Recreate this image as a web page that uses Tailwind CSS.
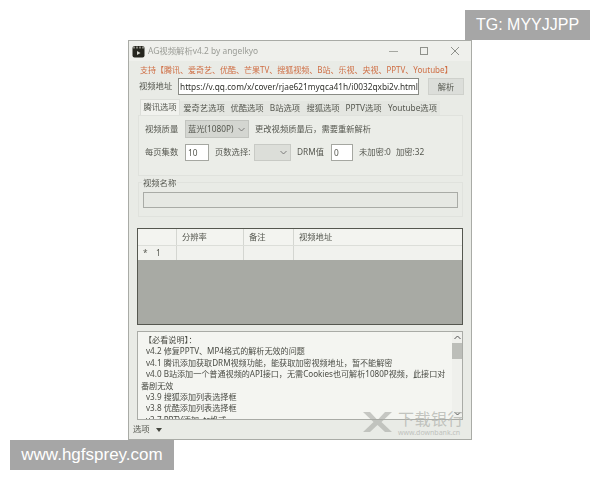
<!DOCTYPE html>
<html lang="en">
<head>
    <meta charset="UTF-8">
    <title>AG视频解析</title>
    <script src="https://cdn.jsdelivr.net/npm/@tailwindcss/browser@4"></script>
</head>
<body class="relative w-[600px] h-[480px] overflow-hidden bg-white font-['Noto_Sans','Noto_Sans_CJK_SC',sans-serif]">

    <!-- badges -->
    <div class="absolute left-[465px] top-[10px] w-[125px] h-[30px] bg-[#a6a6a6] text-white text-[16px] leading-[30px] text-center font-['Liberation_Sans',sans-serif]">TG: MYYJJPP</div>
    <div class="absolute left-[10px] top-[440px] w-[164px] h-[30px] bg-[#a6a6a6] text-white text-[17px] leading-[30px] text-center font-['Liberation_Sans',sans-serif]">www.hgfsprey.com</div>

    <!-- app window -->
    <div class="absolute left-[128px] top-[40px] w-[344px] h-[400px] flex flex-col bg-[#e9ebe6] border border-[#a9aba6] text-[8.3px] text-[#55574f] blur-[0.3px] whitespace-nowrap">

        <div class="h-[20px] flex items-center pl-[3px] bg-[#eff0ec]">
            <svg width="13" height="13" viewBox="0 0 13 13" class="mr-[3px]">
                <rect x="0.5" y="1" width="12" height="11.5" rx="2" fill="#26261f"/>
                <path d="M2 1.5v2M5 1.5v2M8 1.5v2M11 1.5v2" stroke="#e8e8e0" stroke-width="1"/>
                <path d="M5 6l3.5 2L5 10z" fill="#d8d8d0"/>
            </svg>
            <span class="text-[#9a9c96] text-[8.4px]">AG视频解析v4.2 by angelkyo</span>
            <div class="ml-auto flex items-center">
                <svg width="30" height="12" viewBox="0 0 30 12"><path d="M10 6.500h9" stroke="#a5a7a1"/></svg>
                <svg width="32" height="12" viewBox="0 0 32 12"><rect x="11.500" y="2.500" width="7" height="7" fill="none" stroke="#8f918b"/></svg>
                <svg width="30" height="12" viewBox="0 0 30 12"><path d="M10 2l8 8M18 2l-8 8" stroke="#8f918b"/></svg>
            </div>
        </div>

        <div class="h-[18px] pl-[11px] flex items-center text-[#cf6f45] text-[8px]">支持【腾讯、爱奇艺、优酷、芒果TV、搜狐视频、B站、乐视、央视、PPTV、Youtube】</div>

        <div class="h-[16px] mt-[-1px] flex items-center pl-[10px]">
            <span class="w-[39px]">视频地址</span>
            <div class="w-[241px] h-[17px] bg-white border border-[#8a8c86] text-[#30312c] text-[8.3px] leading-[15px] pl-[1px] overflow-hidden">https://v.qq.com/x/cover/rjae621myqca41h/i0032qxbi2v.html</div>
            <div class="ml-[9px] w-[36px] h-[17px] bg-[#dcdeda] border border-[#cfd1cc] text-center leading-[15px]">解析</div>
        </div>

        <div class="h-[16px] mt-[5px] ml-[11px] flex items-end">
            <div class="w-[40px] h-[16px] bg-[#f1f2ee] border border-b-0 border-[#dcded9] text-center leading-[14px]">腾讯选项</div>
            <div class="w-[48px] h-[14px] text-center leading-[14px] bg-[#e4e6e1]">爱奇艺选项</div>
            <div class="w-[38px] h-[14px] text-center leading-[14px] bg-[#e4e6e1]">优酷选项</div>
            <div class="w-[38px] h-[14px] text-center leading-[14px] bg-[#e4e6e1]">B站选项</div>
            <div class="w-[38px] h-[14px] text-center leading-[14px] bg-[#e4e6e1]">搜狐选项</div>
            <div class="w-[43px] h-[14px] text-center leading-[14px] bg-[#e4e6e1]">PPTV选项</div>
            <div class="w-[55px] h-[14px] text-center leading-[14px] bg-[#e4e6e1]">Youtube选项</div>
        </div>

        <div class="h-[61px] mx-[9px] w-[325px] border border-[#e0e2dd] bg-[#ebede8] pl-[6px]">
            <div class="h-[18px] mt-[4px] flex items-center">
                <span class="w-[40px]">视频质量</span>
                <div class="w-[64px] h-[18px] bg-[#d4d6d1] border border-[#c2c4bf] flex items-center pl-[2px] leading-[16px]"><span>蓝光(1080P)</span>
                    <svg width="7" height="5" viewBox="0 0 7 5" class="ml-auto mr-[3px]"><path d="M0.500 1l3 3 3-3" fill="none" stroke="#666" stroke-width="0.8"/></svg>
                </div>
                <span class="ml-[6px]">更改视频质量后，需要重新解析</span>
            </div>
            <div class="h-[17px] mt-[6px] flex items-center">
                <span class="w-[40px]">每页集数</span>
                <div class="w-[24px] h-[17px] bg-white border border-[#a5a7a1] pl-[2px] leading-[15px]">10</div>
                <span class="ml-[6px] w-[39px]">页数选择:</span>
                <div class="w-[37px] h-[17px] bg-[#dcded9] border border-[#c8cac5] flex items-center">
                    <svg width="7" height="5" viewBox="0 0 7 5" class="ml-auto mr-[3px]"><path d="M0.500 1l3 3 3-3" fill="none" stroke="#666" stroke-width="0.8"/></svg>
                </div>
                <span class="ml-[6px] w-[34px]">DRM值</span>
                <div class="w-[22px] h-[17px] bg-white border border-[#a5a7a1] pl-[2px] leading-[15px]">0</div>
                <span class="ml-[6px]">未加密:0</span>
                <span class="ml-[5px]">加密:32</span>
            </div>
        </div>

        <!-- video name group -->
        <div class="relative h-[35px] mt-[6px] mx-[9px] w-[325px] border border-[#e0e2dd] pt-[9px] px-[4px]">
            <span class="absolute left-[3px] top-[-7px] px-[1px] bg-[#e9ebe6] leading-[13px]">视频名称</span>
            <div class="h-[16px] border border-[#a9aba6] bg-[#e6e8e3]"></div>
        </div>

        <!-- grid -->
        <div class="h-[97px] mt-[11px] mx-[8px] w-[326px] border border-[#55574f] bg-[#a8aaa4] flex flex-col">
            <div class="h-[16px] flex bg-[#f3f4f0]">
                <div class="w-[39px] border-r border-[#d4d6d1]"></div>
                <div class="w-[67px] border-r border-[#d4d6d1] pl-[5px] leading-[15px]">分辨率</div>
                <div class="w-[50px] border-r border-[#d4d6d1] pl-[5px] leading-[15px]">备注</div>
                <div class="flex-1 pl-[5px] leading-[15px]">视频地址</div>
            </div>
            <div class="h-[15px] flex bg-[#f1f2ee] border-t border-[#dcded9]">
                <div class="w-[39px] border-r border-[#d4d6d1] pl-[5px] leading-[14px] flex">
                    <span class="w-[13px]">*</span><span>1</span>
                </div>
                <div class="w-[67px] border-r border-[#d4d6d1]"></div>
                <div class="w-[50px] border-r border-[#d4d6d1]"></div>
                <div class="flex-1"></div>
            </div>
        </div>

        <!-- notes -->
        <div class="relative h-[89px] mt-[6px] mx-[8px] w-[326px] border border-[#a9aba6] bg-[#f4f5f1] overflow-hidden flex">
            <div class="w-[315px] text-[8.1px] leading-[11.4px] pl-[3px] pt-[2px] text-[#4a4c45] whitespace-normal">
                <p class="pl-[3px]">【必看说明】：</p>
                <p class="pl-[5px]">v4.2 修复PPTV、MP4格式的解析无效的问题</p>
                <p class="pl-[5px]">v4.1 腾讯添加获取DRM视频功能，能获取加密视频地址，暂不能解密</p>
                <p class="indent-[5px]">v4.0 B站添加一个普通视频的API接口，无需Cookies也可解析1080P视频，此接口对番剧无效</p>
                <p class="pl-[5px]">v3.9 搜狐添加列表选择框</p>
                <p class="pl-[5px]">v3.8 优酷添加列表选择框</p>
                <p class="pl-[5px]">v3.7 PPTV添加 .ts格式</p>
            </div>
            <div class="w-[10px] flex flex-col items-center bg-[#eff0ec]">
                <svg width="7" height="5" viewBox="0 0 7 5" class="mt-[3px]"><path d="M0.500 4l3-3 3 3" fill="none" stroke="#555" stroke-width="1"/></svg>
                <div class="w-[10px] h-[16px] mt-[3px] bg-[#bcbeb9]"></div>
                <svg width="7" height="5" viewBox="0 0 7 5" class="mt-auto mb-[3px]"><path d="M0.500 1l3 3 3-3" fill="none" stroke="#555" stroke-width="1"/></svg>
            </div>
        </div>

        <!-- status strip -->
        <div class="flex-1 flex items-center pl-[4px]">
            <span>选项</span>
            <svg width="6" height="4" viewBox="0 0 6 4" class="ml-[6px]"><path d="M0 0h6L3 4z" fill="#45473f"/></svg>
        </div>
    </div>

    <!-- watermark -->
    <div class="absolute left-[362px] top-[411px] w-[108px] h-[26px] flex">
        <svg width="31" height="22" viewBox="0 0 31 22" class="opacity-60">
            <path d="M1 1h7l7.500 8L23 1h7l-10.500 10L30 21h-7l-7.500-7L8 21H1l10.500-10z" fill="#a8aaa5"/>
        </svg>
        <div class="ml-[5px] flex flex-col">
            <span class="text-[16px] leading-[16px] tracking-[0.5px] text-[#b5b7b2]/80 whitespace-nowrap">下载银行</span>
            <span class="text-[7px] leading-[9px] mt-[1px] text-[#c0c2bd] whitespace-nowrap">www.downbank.cn</span>
        </div>
    </div>

</body>
</html>
